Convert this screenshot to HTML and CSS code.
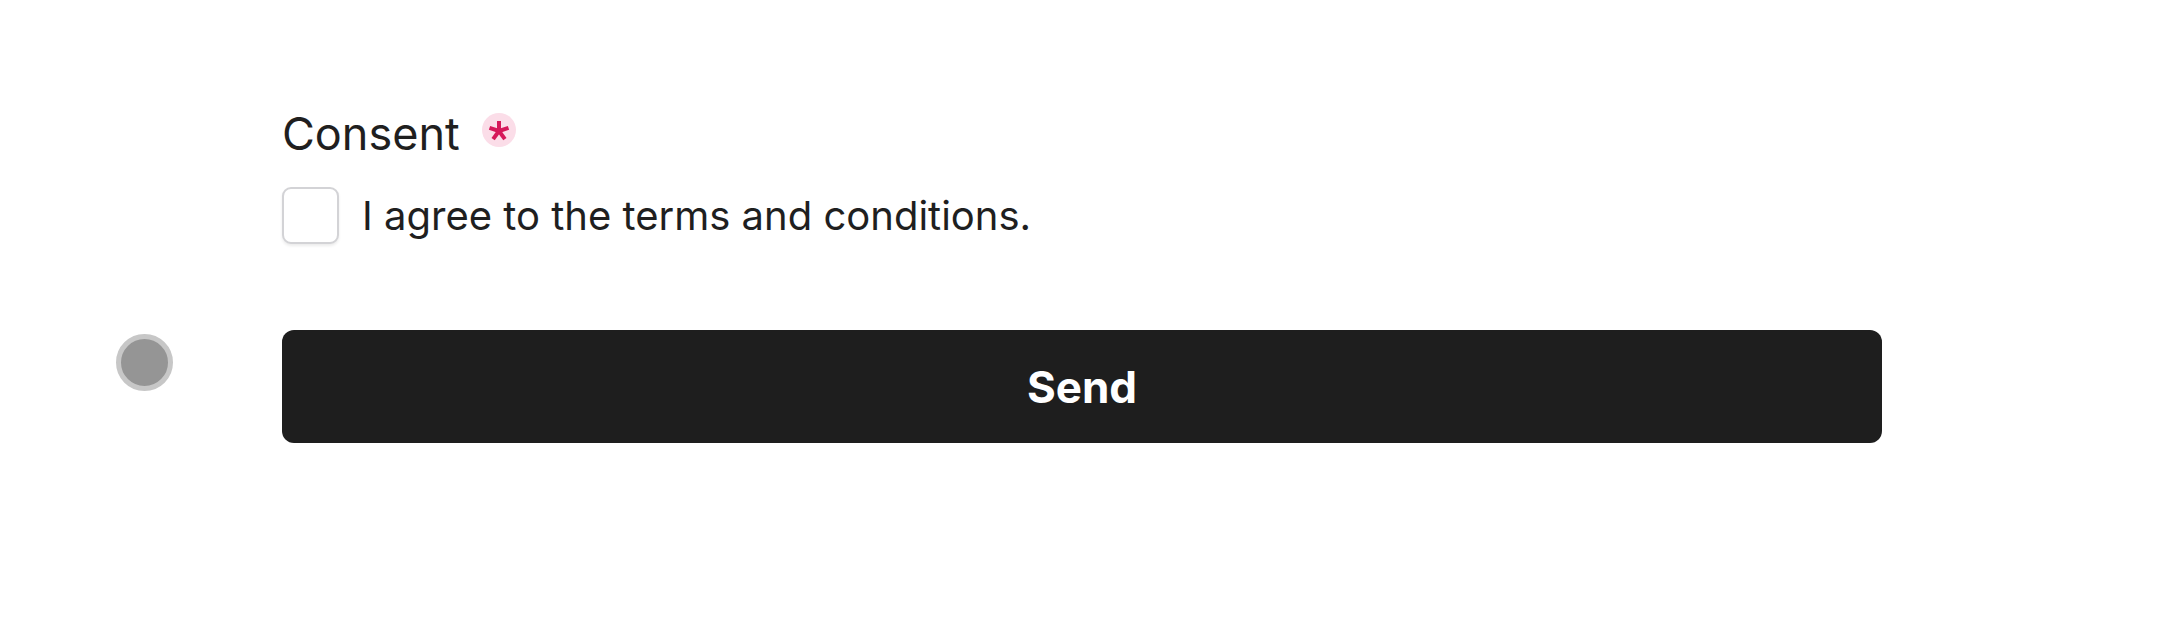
FILE: index.html
```html
<!DOCTYPE html>
<html lang="en">
<head>
<meta charset="utf-8">
<title>Consent form</title>
<link rel="stylesheet" href="styles.css">
</head>
<body>
<main class="page">
  <section class="form">
    <div class="field">
      <div class="label-row">
        <span class="label">Consent</span>
        <span class="required" aria-label="required">
          <svg viewBox="0 0 34 34" width="34" height="34" aria-hidden="true">
            <g stroke="#d6185a" stroke-width="4" stroke-linecap="butt" fill="none">
              <line x1="17" y1="18" x2="17" y2="8"/>
              <line x1="17" y1="18" x2="26.5" y2="14.9"/>
              <line x1="17" y1="18" x2="7.5" y2="14.9"/>
              <line x1="17" y1="18" x2="22.9" y2="26.1"/>
              <line x1="17" y1="18" x2="11.1" y2="26.1"/>
            </g>
          </svg>
        </span>
      </div>
      <label class="check-row">
        <span class="checkbox"></span>
        <span class="check-text">I agree to the terms and conditions.</span>
      </label>
    </div>
    <div class="submit-row">
      <span class="dot"></span>
      <button class="send">Send</button>
    </div>
  </section>
</main>
</body>
</html>
```

FILE: styles.css
```css
html, body {
  margin: 0;
  padding: 0;
  background: #ffffff;
}

body {
  font-family: "Inter", "Liberation Sans", sans-serif;
  color: #1f1f1f;
}

.page {
  padding: 108px 0 0 116px;
}

.form {
  display: flex;
  flex-direction: column;
}

.field {
  display: flex;
  flex-direction: column;
  margin-left: 166px;
  gap: 27px;
}

.label-row {
  display: flex;
  align-items: flex-start;
  gap: 22px;
}

.label {
  font-size: 45px;
  line-height: 52px;
  font-weight: 400;
}

.required {
  display: block;
  width: 34px;
  height: 34px;
  border-radius: 50%;
  background: #fbdde8;
  margin-top: 5px;
}

.required svg {
  display: block;
}

.check-row {
  display: flex;
  align-items: center;
  gap: 23px;
}

.checkbox {
  box-sizing: border-box;
  width: 57px;
  height: 57px;
  border: 2px solid #d3d3d6;
  border-radius: 9px;
  background: #ffffff;
  box-shadow: 0 2px 3px rgba(0, 0, 0, 0.08);
}

.check-text {
  font-size: 40px;
  line-height: 48px;
}

.submit-row {
  display: flex;
  align-items: flex-start;
  margin-top: 86px;
}

.dot {
  box-sizing: border-box;
  width: 57px;
  height: 57px;
  border-radius: 50%;
  background: #959595;
  border: 5px solid #c7c7c7;
  margin-top: 4px;
  margin-right: 109px;
}

.send {
  width: 1600px;
  height: 113px;
  border: none;
  border-radius: 12px;
  background: #1e1e1e;
  color: #ffffff;
  font-family: "Inter", "Liberation Sans", sans-serif;
  font-size: 44px;
  font-weight: 700;
  padding: 0;
}
```
